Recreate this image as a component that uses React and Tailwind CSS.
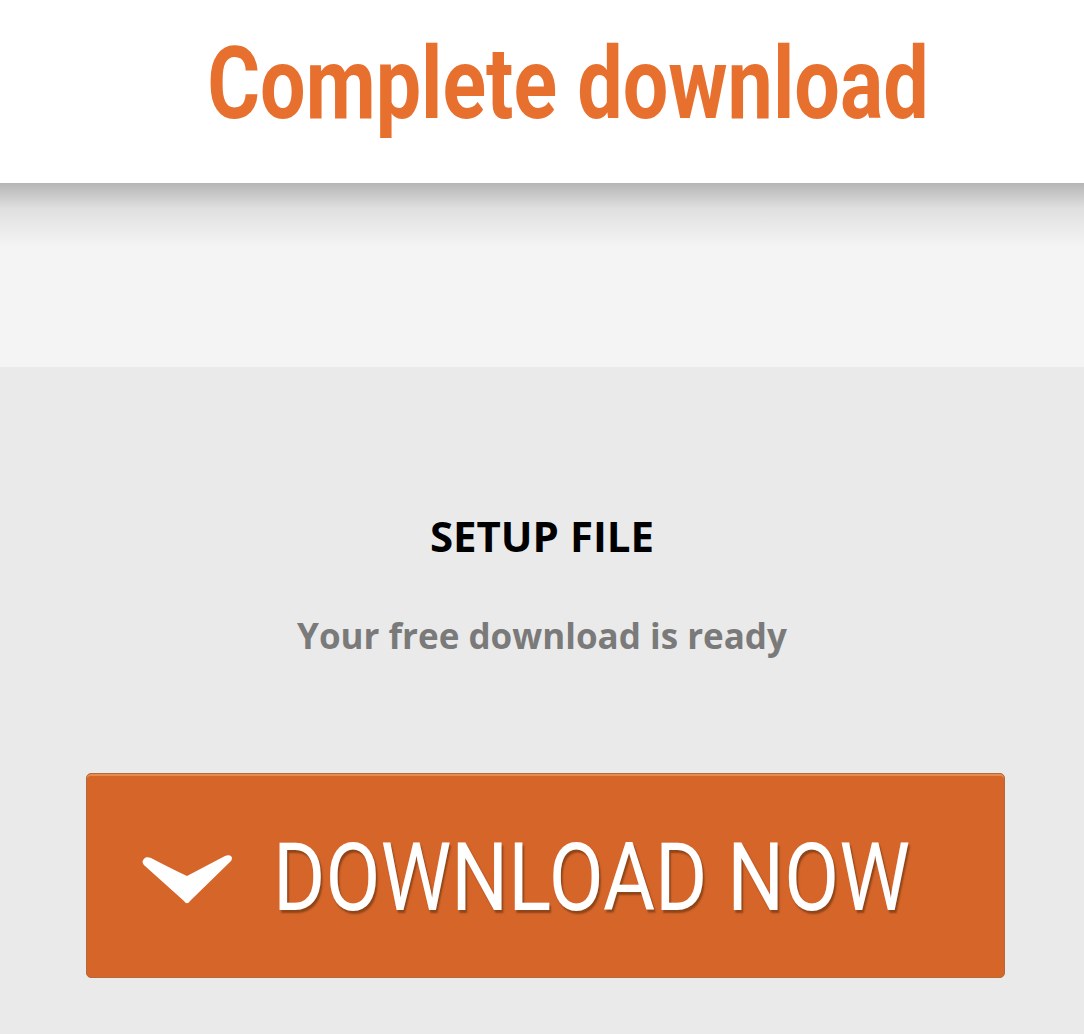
import React from "react";

function Chevron() {
  return (
    <svg width="92" height="52" viewBox="0 -2 92 52" className="shrink-0 mt-[6px]">
      <path
        d="M2 4 C 3 2, 6 2, 9 3 Q 30 14, 45 21 Q 62 12, 83 1 C 88 -1, 92 2, 89 6 L 48 46 C 46 49, 44 49, 42 46 L 3 11 C 0 8, 0 6, 2 4 Z"
        fill="white"
      />
    </svg>
  );
}

export default function App() {
  return (
    <div className="w-[1084px] min-h-[1034px] bg-[#eaeaea]" style={{ fontFamily: "'Open Sans', sans-serif" }}>
      <header className="h-[183px] bg-white flex justify-center pl-[52px] pt-[33px]">
        <h1
          className="text-[101px] leading-none font-bold text-[#e8702f] scale-x-[0.80] origin-center whitespace-nowrap h-[110px]"
          style={{ fontFamily: "Roboto, sans-serif" }}
        >
          Complete download
        </h1>
      </header>
      <div className="h-[184px] bg-[#f4f4f4]">
        <div className="h-[64px] bg-linear-to-b from-[#b5b5b5] via-[#e0e0e0] via-40% to-[#f4f4f4]" />
      </div>
      <main className="flex flex-col items-center pt-[148px]">
        <h2 className="text-[42px] leading-none font-bold text-black">SETUP FILE</h2>
        <p className="mt-[61px] text-[35px] leading-none font-bold text-[#7a7a7a]">Your free download is ready</p>
        <button className="mt-[120px] ml-[7px] w-[919px] h-[205px] rounded-[5px] border border-[#b36a3a] bg-[#d6652a] shadow-[inset_0_2px_0_#e58c4c] flex items-center pl-[55px] gap-[39px]">
          <Chevron />
          <span
            className="text-[94px] leading-none font-normal text-white whitespace-nowrap scale-x-[0.85] origin-left [text-shadow:2px_3px_2px_#8f4518] mt-[4px]"
            style={{ fontFamily: "Roboto, sans-serif" }}
          >
            DOWNLOAD NOW
          </span>
        </button>
      </main>
    </div>
  );
}
